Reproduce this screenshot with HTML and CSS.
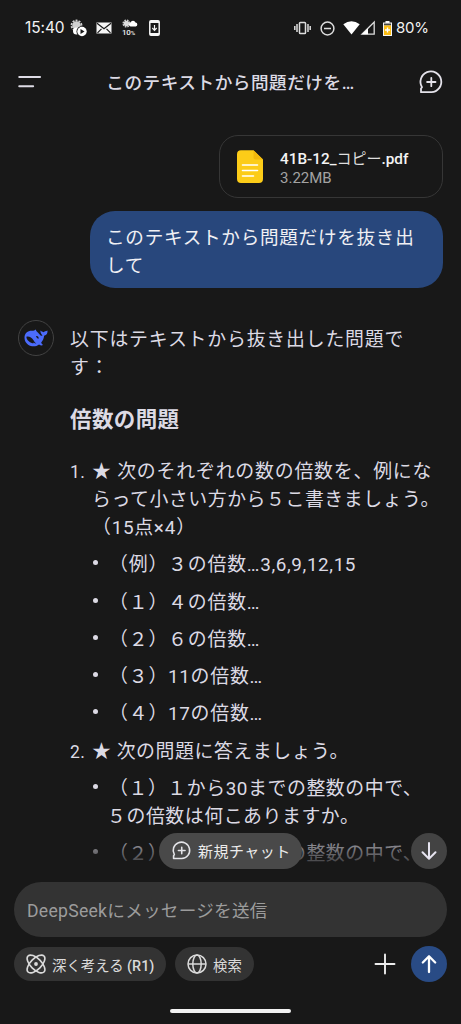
FILE: index.html
```html
<!DOCTYPE html>
<html lang="ja">
<head>
<meta charset="utf-8">
<title>DeepSeek</title>
<link rel="stylesheet" href="styles.css">
</head>
<body>
<div class="screen">
  <div class="status">
    <span class="clock">15:40</span>
    <svg class="ic-weather" width="18" height="18" viewBox="0 0 18 18"><circle cx="6.500" cy="6.500" r="4.200" fill="#d0d0d0"/><circle cx="6.500" cy="6.500" r="5" fill="none" stroke="#d0d0d0" stroke-width="1.800" stroke-dasharray="2 1.140"/><circle cx="6.500" cy="12" r="3.500" fill="#fff"/><circle cx="12" cy="12.500" r="5.500" fill="#181818"/><circle cx="12" cy="12.500" r="4.700" fill="#fff"/><path d="M10.500 10v5l4-2.500z" fill="#181818"/></svg>
    <svg class="ic-mail" width="16" height="12" viewBox="0 0 16 12"><path d="M.5.500h15v11h-15z" fill="#f5f5f5"/><path d="M1 1.200l7 5.500 7-5.500M1.500 10.800l4-4M14.500 10.800l-4-4" fill="none" stroke="#181818" stroke-width="1.200"/></svg>
    <span class="rain">
      <svg width="16" height="9" viewBox="0 0 16 9"><circle cx="4.500" cy="4.500" r="2.800" fill="#ddd"/><circle cx="4.500" cy="4.500" r="3.300" fill="none" stroke="#ccc" stroke-width="1.600" stroke-dasharray="1.600 1"/><path d="M8.500 7.500a2 2 0 0 1 0-3.900 2.700 2.700 0 0 1 5-.2 2.100 2.100 0 0 1 .3 4.100z" fill="#fff"/></svg>
      <span class="rain-text">10<i>%</i></span>
    </span>
    <svg class="ic-phone" width="11" height="16" viewBox="0 0 11 16"><rect x=".8" y=".8" width="9.400" height="14.400" rx="1.200" fill="none" stroke="#f5f5f5" stroke-width="1.500"/><path d="M1 2h9M1 14h9" stroke="#f5f5f5" stroke-width="2"/><path d="M5.500 5v5M3.300 8l2.200 2.300L7.700 8" fill="none" stroke="#f5f5f5" stroke-width="1.200"/></svg>
    <svg class="ic-vib" width="17" height="14" viewBox="0 0 17 14"><rect x="5.500" y="1.500" width="6" height="11" rx=".8" fill="none" stroke="#ddd" stroke-width="1.500"/><path d="M3 3v8M14 3v8M.8 5v4M16.200 5v4" stroke="#ddd" stroke-width="1.500"/></svg>
    <svg class="ic-dnd" width="15" height="15" viewBox="0 0 15 15"><circle cx="7.500" cy="7.500" r="6.400" fill="none" stroke="#ddd" stroke-width="1.500"/><path d="M4 7.500h7" stroke="#ddd" stroke-width="1.500"/></svg>
    <svg class="ic-wifi" width="17" height="14" viewBox="0 0 17 14"><path d="M.3 3.300Q8.500-2.700 16.700 3.300L8.500 13.500z" fill="#fff"/></svg>
    <svg class="ic-cell" width="14" height="14" viewBox="0 0 14 14"><path d="M13.200 1v12.200H1z" fill="none" stroke="#ddd" stroke-width="1.300"/><path d="M7 7.200v6H1z" fill="#fff"/></svg>
    <svg class="ic-batt" width="9" height="15" viewBox="0 0 9 15"><path d="M2.500 0h4v1.500H9V15H0V1.500h2.500z" fill="#f5f5f5"/><path d="M1 2.500h7v2H1z" fill="#444"/><path d="M1 4.500h7V14H1z" fill="#fbbc12"/><path d="M4.500 6.500v5M2 9h5" stroke="#fff" stroke-width="1.400"/></svg>
    <span class="percent">80%</span>
  </div>

  <div class="header">
    <svg width="24" height="16" viewBox="0 0 24 16"><path d="M2.200 3h20.900M2.200 12.300h14" stroke="#dddbe5" stroke-width="1.900" stroke-linecap="round"/></svg>
    <div class="title">このテキストから問題だけを…</div>
    <svg width="24" height="24" viewBox="0 0 24 24" fill="none" stroke="#e4e2ea" stroke-width="1.800" stroke-linejoin="round" stroke-linecap="round"><path d="M2 22.200V18.500L3 17.200A10.400 10.400 0 1 1 12.400 22.200z"/><path d="M12.300 7.800v8.400M8.100 12h8.400"/></svg>
  </div>

  <div class="chat">
    <div class="file">
      <svg width="26" height="33" viewBox="0 0 26 33"><path d="M4 .3h12.500L26 9.500V29a4 4 0 0 1-4 4H4a4 4 0 0 1-4-4V4.300a4 4 0 0 1 4-4z" fill="#fccc18"/><path d="M16.500.3L26 9.500h-7.500a2 2 0 0 1-2-2z" fill="#f2b90c"/><path d="M5.500 15h15M5.500 20.500h15M5.500 26h11" stroke="#fff" stroke-width="1.600" stroke-linecap="round"/></svg>
      <div>
        <div class="file-name">41B-12_<span class="kana">コピー</span>.pdf</div>
        <div class="file-size">3.22MB</div>
      </div>
    </div>
    <div class="bubble">このテキストから問題だけを抜き出<br>して</div>

    <div class="reply">
      <div class="avatar">
        <svg width="24" height="18" viewBox="0 0 24 18"><path d="M.5 8.500C.5 4 3.800 1.600 7.800 1.700c1.300 0 2.400.3 3.200-.7.600-.8 1-.7 1 0 .1 1 .9 1.700 1.600 2.300l3 3.200c.8.500 1.400.3 1.900-.1C17 5 16.200 3.200 16.400 1.600c.8.800 2 1 3.100 1.700.7-1 2.400-.9 4-1.800.3 2.600-.8 4.800-3.400 5.300-.3 2.700-1.200 5-2.900 6.700.3 1.100 1 1.900 1.900 2.300-1 1-2.800.6-4-.4-2.300 1.700-5.400 2.400-8.300 1.500C2.900 15.800.5 12.600.5 8.500z" fill="#4b6bfb"/><path d="M2.400 7.700c2.600-.8 5.400 1 7.300 3.700.8 1.300 1.500 2.500 2.700 3-1 .2-1.900-.2-2.700-.9-.1.900-.6 1-1.300.7C5.200 13.200 2.600 10.900 2.400 7.700z" fill="#181818"/><path d="M12 7.200c1.600-.5 2.700.6 2.700 2.400-.7.400-2-.4-2.700-2.400z" fill="#181818"/></svg>
      </div>
      <div class="answer">
        <p class="para">以下はテキストから抜き出した問題で<br>す：</p>
        <h3 class="heading">倍数の問題</h3>
        <div class="row"><span class="num">1.</span><span>★ 次のそれぞれの数の倍数を、例にな<br><span class="tight">らって小さい方から５こ書きましょう。</span><br>（<span class="digits">15</span>点×4）</span></div>
        <div class="row sub"><span class="dot"></span><span>（例）３の倍数…<span class="digits">3,6,9,12,15</span></span></div>
        <div class="row sub"><span class="dot"></span><span>（１）４の倍数…</span></div>
        <div class="row sub"><span class="dot"></span><span>（２）６の倍数…</span></div>
        <div class="row sub"><span class="dot"></span><span>（３）<span class="digits">11</span>の倍数…</span></div>
        <div class="row sub"><span class="dot"></span><span>（４）<span class="digits">17</span>の倍数…</span></div>
        <div class="row"><span class="num">2.</span><span><span class="tight">★ 次の問題に答えましょう。</span></span></div>
        <div class="row sub"><span class="dot"></span><span><span class="tight">（１）１から<span class="digits">30</span>までの整数の中で、</span><br><span class="tight outdent">５の倍数は何こありますか。</span></span></div>
        <div class="row sub"><span class="dot"></span><span class="tight">（２）１から<span class="digits">50</span>までの整数の中で、</span></div>
      </div>
    </div>
    <div class="fade"></div>
    <div class="newchat">
      <svg width="19" height="19" viewBox="0 0 24 24" fill="none" stroke="#e4e4e8" stroke-width="2" stroke-linejoin="round" stroke-linecap="round"><path d="M2 22.200V18.500L3 17.200A10.400 10.400 0 1 1 12.400 22.200z"/><path d="M12.300 7.800v8.400M8.100 12h8.400"/></svg>
      <span>新規チャット</span>
    </div>
    <div class="down">
      <svg width="18" height="20" viewBox="0 0 18 20" fill="none" stroke="#e6e4f0" stroke-width="2" stroke-linecap="round" stroke-linejoin="round"><path d="M9 2v15.500M2.500 11.300L9 17.700l6.500-6.400"/></svg>
    </div>
  </div>

  <div class="composer">
    <div class="input">DeepSeekにメッセージを送信</div>
    <div class="tools">
      <div class="chip think">
        <svg width="20" height="20" viewBox="0 0 20 20" fill="none" stroke="#dadada" stroke-width="1.600"><ellipse cx="10" cy="10" rx="11.300" ry="5.500" transform="rotate(45 10 10)"/><ellipse cx="10" cy="10" rx="11.300" ry="5.500" transform="rotate(-45 10 10)"/><circle cx="10" cy="10" r="1.900" fill="#dadada" stroke="none"/></svg>
        <span>深く考える <b>(R1)</b></span>
      </div>
      <div class="chip search">
        <svg width="20" height="20" viewBox="0 0 20 20" fill="none" stroke="#dadada" stroke-width="1.500"><circle cx="10" cy="10" r="9"/><ellipse cx="10" cy="10" rx="4.200" ry="9"/><path d="M1 10h18"/></svg>
        <span>検索</span>
      </div>
      <svg class="plus" width="22" height="22" viewBox="0 0 22 22"><path d="M11 1.500v19M1.500 11h19" stroke="#ececec" stroke-width="1.900" stroke-linecap="round"/></svg>
      <div class="send"><svg width="18" height="20" viewBox="0 0 18 20" fill="none" stroke="#fff" stroke-width="2.300" stroke-linecap="round" stroke-linejoin="round"><path d="M9 18V2.500M2.800 8.500L9 2.300l6.200 6.200"/></svg></div>
    </div>
    <div class="homebar"></div>
  </div>
</div>
</body>
</html>
```
FILE: styles.css
```css
* { box-sizing: border-box; }
body {
  margin: 0;
  background: #181818;
  color: #dcdae4;
  font-family: Roboto, "Noto Sans CJK JP", sans-serif;
}
.screen {
  width: 461px;
  height: 1024px;
  display: flex;
  flex-direction: column;
  overflow: hidden;
  white-space: nowrap;
}
svg { display: block; flex: none; overflow: visible; }
.status {
  height: 56px;
  flex: none;
  display: flex;
  align-items: center;
  padding-left: 25px;
}
.clock, .percent {
  font: 500 15.5px/20px Inter, sans-serif;
  color: #f2f2f2;
}
.clock { width: 45px; font-weight: 400; letter-spacing: -0.1px; }
.percent { margin-left: 4px; font-weight: 400; font-size: 15px; letter-spacing: -0.3px; }
.ic-mail { margin-left: 8px; }
.rain { margin-left: 10px; width: 16px; height: 18px; }
.rain-text { display: block; font: 500 8px/10px Roboto, sans-serif; color: #eee; letter-spacing: -0.2px; }
.rain-text i { font-style: normal; font-size: 6px; }
.ic-phone { margin-left: 11px; }
.ic-vib { margin-left: 134px; }
.ic-dnd { margin-left: 9px; }
.ic-wifi { margin-left: 8px; }
.ic-cell { margin-left: 1px; }
.ic-batt { margin-left: 8px; }
.header {
  height: 52px;
  flex: none;
  display: flex;
  align-items: center;
  justify-content: space-between;
  padding: 0 18px 0 17px;
}
.title { font-size: 17.6px; font-weight: 500; letter-spacing: 0.55px; line-height: 26px; padding: 1px 0 0 1px; }
.chat {
  height: 766px;
  flex: none;
  padding: 27px 18px 0;
  position: relative;
  display: flex;
  flex-direction: column;
  overflow: hidden;
}
.file {
  align-self: flex-end;
  width: 224px;
  height: 63px;
  flex: none;
  display: flex;
  align-items: center;
  gap: 17px;
  padding-left: 17px;
  border: 1.5px solid #363636;
  border-radius: 19px;
}
.file-name { font-size: 15.3px; font-weight: 500; line-height: 19px; color: #f4f4f4; padding-top: 3px; }
.kana { font-weight: 400; color: #dedede; font-size: 15px; }
.file-size { font-size: 15px; line-height: 18px; color: #a3a3a3; }
.bubble {
  align-self: flex-end;
  width: 353px;
  height: 77px;
  flex: none;
  margin-top: 13px;
  padding: 13px 0 0 16px;
  border-radius: 25px;
  background: #28477c;
  color: #f0f0f4;
  font-size: 18.6px;
  letter-spacing: 0.72px;
  line-height: 28px;
}
.reply { display: flex; margin-top: 32px; }
.avatar {
  width: 36px;
  height: 36px;
  flex: none;
  border: 1.5px solid #424242;
  border-radius: 50%;
  display: flex;
  align-items: center;
  justify-content: center;
}
.answer { margin: 6px 0 0 16px; font-size: 18.9px; letter-spacing: 0.8px; line-height: 28px; }
.tight { letter-spacing: 0.55px; }
.outdent { margin-left: -2px; }
.digits { letter-spacing: 0.6px; }
.para { margin: 0; }
.heading { margin: 23px 0; font-size: 21.500px; line-height: 30px; letter-spacing: 0.4px; font-weight: 700; }
.row { display: flex; margin-bottom: 9.3px; }
.num { width: 22px; flex: none; font-size: 17.5px; letter-spacing: 0.5px; }
.sub { padding-left: 22px; }
.dot { width: 5px; height: 5px; flex: none; border-radius: 50%; background: #dcdae4; margin: 9px 12px 0 1px; }
.sub > span:last-child { margin-left: -1px; }
.fade {
  position: absolute;
  left: 0;
  right: 0;
  bottom: 0;
  height: 50px;
  background: linear-gradient(to bottom, rgba(24, 24, 24, 0), #181818);
}
.newchat {
  position: absolute;
  left: 159px;
  top: 725px;
  width: 143px;
  height: 36px;
  border-radius: 18px;
  background: #494949;
  display: flex;
  align-items: center;
  gap: 7px;
  padding: 0 0 1px 13px;
  font-size: 15px;
  letter-spacing: 0.5px;
  color: #ececec;
}
.down {
  position: absolute;
  left: 411px;
  top: 725px;
  width: 36px;
  height: 36px;
  border-radius: 50%;
  background: #434343;
  display: flex;
  align-items: center;
  justify-content: center;
}
.composer { padding: 8px 14px 0; }
.input {
  height: 55px;
  border-radius: 27.5px;
  background: #333;
  padding-left: 13px;
  line-height: 59px;
  font-size: 17.6px;
  letter-spacing: 0.27px;
  color: #9c9c9c;
}
.tools { display: flex; align-items: center; height: 36px; margin-top: 9px; }
.chip {
  height: 34px;
  border-radius: 17px;
  background: #333;
  display: flex;
  align-items: center;
  gap: 6px;
  padding-left: 12px;
  font-size: 14.4px;
  color: #dadada;
}
.chip b { font-weight: 500; }
.think { width: 152px; }
.search { width: 79px; margin-left: 9px; }
.plus { margin-left: 120px; }
.send {
  width: 36px;
  height: 36px;
  border-radius: 50%;
  background: #294b85;
  margin-left: 15px;
  display: flex;
  align-items: center;
  justify-content: center;
}
.homebar { width: 121px; height: 4px; border-radius: 2px; background: #f2f2f2; margin: 27px auto 0; }
```
